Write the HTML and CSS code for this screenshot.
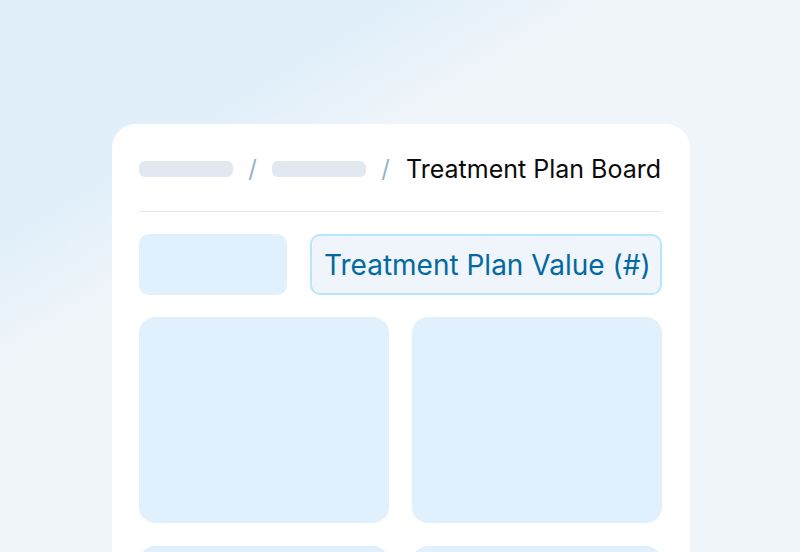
FILE: index.html
```html
<!DOCTYPE html>
<html lang="en">
<head>
  <meta charset="UTF-8">
  <meta name="viewport" content="width=device-width, initial-scale=1.0">
  <title>Treatment Plan Board</title>
  <link rel="stylesheet" href="styles.css">
</head>
<body>
  <div class="board">
    <div class="crumbs">
      <span class="crumb-pill"></span>
      <span class="crumb-sep">/</span>
      <span class="crumb-pill"></span>
      <span class="crumb-sep">/</span>
      <span class="crumb-title">Treatment Plan Board</span>
    </div>
    <div class="top-row">
      <div class="stub"></div>
      <div class="value-box">Treatment Plan Value (#)</div>
    </div>
    <div class="tiles">
      <div class="tile"></div>
      <div class="tile"></div>
      <div class="tile"></div>
      <div class="tile"></div>
    </div>
  </div>
</body>
</html>
```

FILE: styles.css
```css
html, body
{
  height:100%;
}
body
{
  margin:0;
  overflow:hidden;
  font-family:Inter, "Liberation Sans", sans-serif;
  background:linear-gradient(149deg, #e0effa 23%, #f0f5f9 36%);
}
.board
{
  box-sizing:border-box;
  width:578px;
  margin:124px 0 0 112px;
  padding:30px 28px 40px 27px;
  background:#fff;
  border-radius:24px;
}
.crumbs
{
  display:flex;
  align-items:center;
  height:29px;
  padding-bottom:28px;
  border-bottom:1px solid #e2e8f0;
}
.crumb-pill
{
  width:94px;
  height:16px;
  border-radius:6px;
  background:#e2e8f0;
}
.crumb-sep
{
  width:39px;
  text-align:center;
  font-size:24px;
  color:#94b3c9;
}
.crumb-title
{
  margin-left:1px;
  font-size:25px;
  color:#0a0a0a;
  white-space:nowrap;
}
.top-row
{
  display:grid;
  grid-template-columns:148px minmax(0, 1fr);
  gap:23px;
  margin-top:22px;
}
.stub
{
  height:61px;
  border-radius:10px;
  background:#e0f0fc;
}
.value-box
{
  box-sizing:border-box;
  height:61px;
  min-width:0;
  overflow:hidden;
  display:flex;
  align-items:center;
  padding:0 10px 0 12px;
  border:2px solid #bae6fd;
  border-radius:10px;
  background:#eff5fb;
  color:#0369a1;
  font-size:28px;
  white-space:nowrap;
}
.tiles
{
  display:grid;
  grid-template-columns:1fr 1fr;
  gap:23px;
  margin-top:22px;
}
.tile
{
  height:206px;
  border-radius:16px;
  background:#e0f0fc;
}
```
